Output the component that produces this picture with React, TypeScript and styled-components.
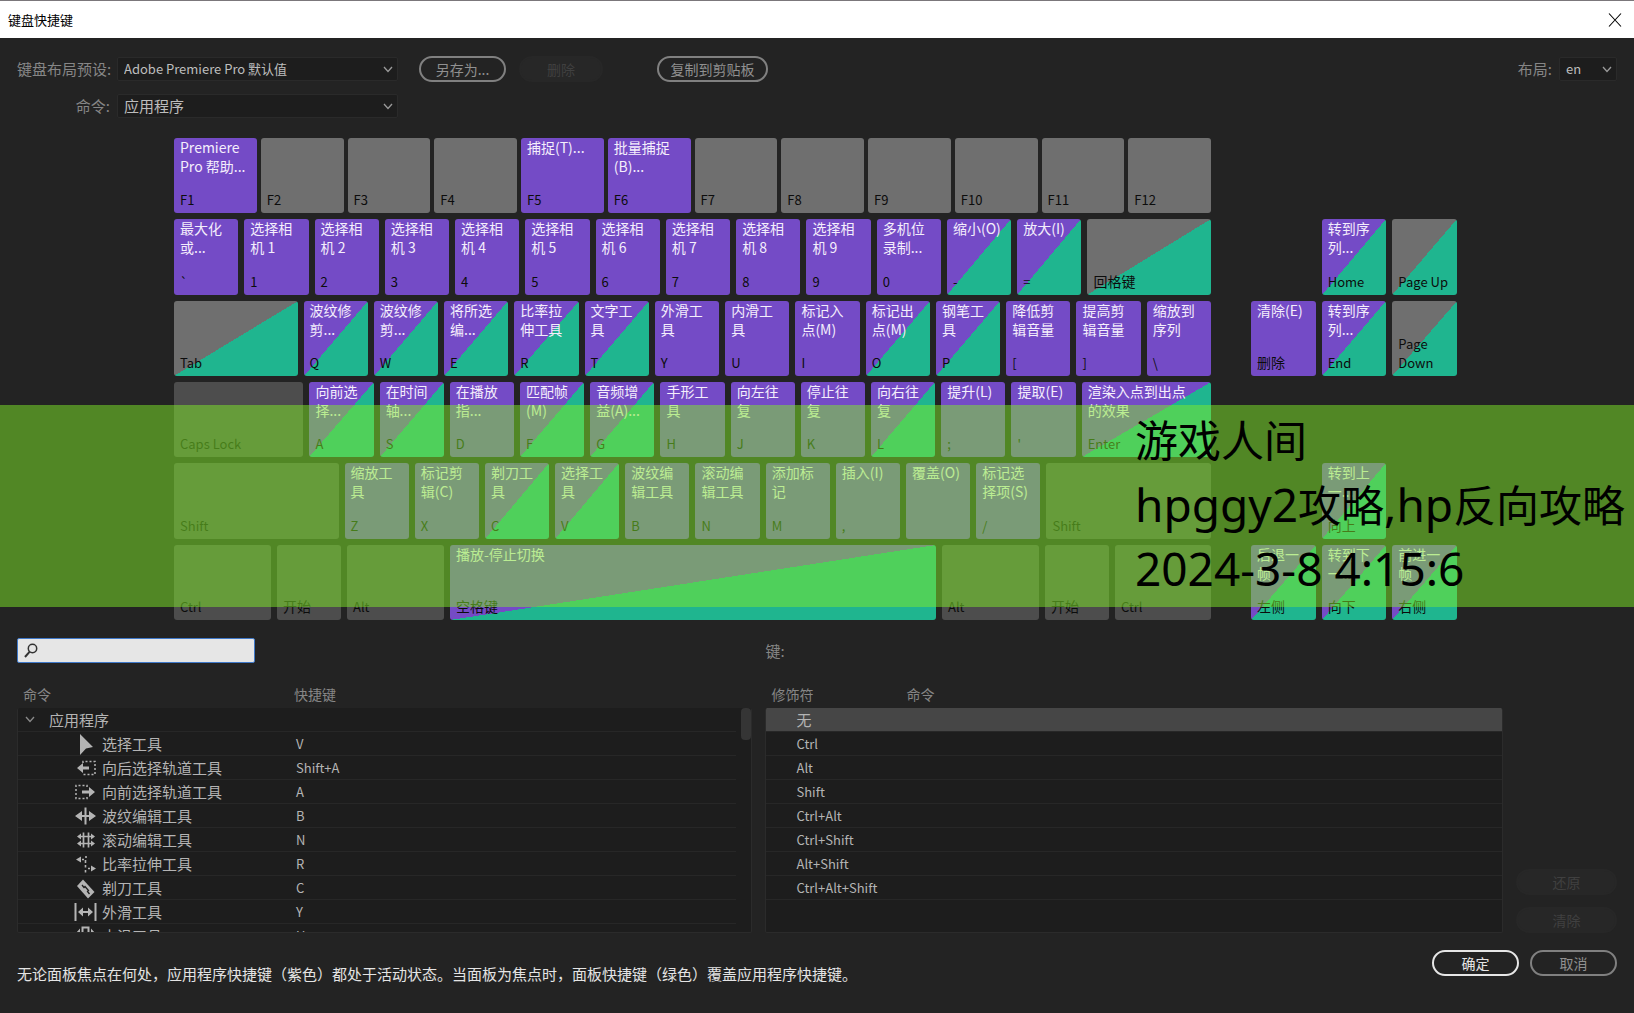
import React from "react";
import styled, { createGlobalStyle, css } from "styled-components";

const GlobalStyle = createGlobalStyle`
  * { box-sizing: border-box; }
  body {
    margin: 0;
    background: #232323;
    color: #b4b4b4;
    font: 15px/24px "Noto Sans CJK SC", sans-serif;
  }
  button, input, select { font: inherit; color: inherit; margin: 0; }
`;

const Dialog = styled.div`
  min-height: 100vh;
  display: flex;
  flex-direction: column;
  background: #232323;
  border-top: 1px solid #7b777b;
`;

const TitleBar = styled.header`
  display: flex;
  align-items: center;
  justify-content: space-between;
  height: 37px;
  padding: 0 11px 0 8px;
  background: #fff;
  color: #000;
`;

const Title = styled.h1`
  margin: 0;
  font-size: 13px;
  font-weight: 400;
  line-height: 24px;
`;

const CloseButton = styled.button`
  display: flex;
  padding: 0;
  border: 0;
  background: none;
`;

const Toolbar = styled.form`
  display: flex;
  flex-direction: column;
  gap: 11px;
  padding: 18px 17px 19px;
`;

const ToolRow = styled.div`
  display: flex;
  align-items: center;
  height: 26px;
`;

const Label = styled.label<{ $wide?: boolean }>`
  color: #868686;
  text-align: right;
  white-space: nowrap;
  margin-right: 7px;
  ${(p) => p.$wide && css`width: 93px;`}
`;

const SelectBox = styled.div<{ $width: number }>`
  position: relative;
  width: ${(p) => p.$width}px;
  svg {
    position: absolute;
    right: 5px;
    top: 9px;
    pointer-events: none;
  }
`;

const Select = styled.select<{ $latin?: boolean }>`
  appearance: none;
  display: block;
  width: 100%;
  height: 24px;
  padding: 0 20px 0 6px;
  border: 1px solid #2a2a2a;
  border-radius: 2px;
  background: #1d1d1d;
  color: #bdbdbd;
  font-size: ${(p) => (p.$latin ? 13 : 15)}px;
  line-height: 22px;
`;

const PillButton = styled.button<{ $width: number; $primary?: boolean }>`
  width: ${(p) => p.$width}px;
  height: 26px;
  padding: 0;
  border: 2px solid ${(p) => (p.$primary ? "#e6e6e6" : "#808080")};
  border-radius: 13px;
  background: transparent;
  color: ${(p) => (p.$primary ? "#e6e6e6" : "#909090")};
  font-size: 14px;
  line-height: 20px;
  white-space: nowrap;
  &:disabled {
    border-color: #272727;
    background: #272727;
    color: #404040;
  }
`;

const ButtonGroup = styled.div<{ $gap: number; $start?: number }>`
  display: flex;
  gap: ${(p) => p.$gap}px;
  margin-left: ${(p) => p.$start || 0}px;
`;

const Spacer = styled.div`
  flex: 1;
`;

const Board = styled.main`
  position: relative;
  display: grid;
  grid-template-columns: 174fr 1037fr 40fr 206fr 177fr;
  height: 482px;
`;

const KeyArea = styled.section<{ $column: number }>`
  grid-column: ${(p) => p.$column};
  display: grid;
  grid-template-rows: repeat(6, 1fr);
  gap: 6px;
  min-width: 0;
`;

const KeyRow = styled.div<{ $gap?: number }>`
  display: flex;
  gap: ${(p) => p.$gap || 6}px;
  min-width: 0;
`;

type Tone = "app" | "both" | "panel" | "none" | "mod";

const tones: Record<Tone, string> = {
  app: "#744bc6",
  both: "linear-gradient(to bottom right, #744bc6 50%, #1fb58f 50%)",
  panel: "linear-gradient(to bottom right, #6f6f6f 50%, #1fb58f 50%)",
  none: "#6f6f6f",
  mod: "#4d4d4d",
};

/* The basis equals the left padding, so weights stay proportional to full key widths. */
const KeyCap = styled.button<{ $tone: Tone; $weight: number }>`
  flex: ${(p) => p.$weight - 6} 1 6px;
  min-width: 0;
  display: flex;
  flex-direction: column;
  justify-content: space-between;
  padding: 0 0 4px 6px;
  border: 0;
  border-radius: 3px;
  background: ${(p) => tones[p.$tone]};
  text-align: left;
  white-space: pre;
  overflow: hidden;
`;

const Command = styled.span`
  color: #f4eefc;
  font-size: 14px;
  line-height: 19px;
`;

const Legend = styled.span<{ $latin: boolean }>`
  color: #0c0c0c;
  font-size: ${(p) => (p.$latin ? 13 : 14)}px;
  line-height: 19px;
`;

const Gap = styled.div`
  flex: 58 1 6px;
`;

const Banner = styled.aside`
  position: absolute;
  left: 0;
  right: 0;
  top: 267px;
  height: 202px;
  display: flex;
  justify-content: flex-end;
  background: rgba(128, 236, 40, 0.5);
  pointer-events: none;
`;

const BannerText = styled.div`
  width: 499px;
  padding-top: 1px;
  color: #000;
  font-family: "Noto Sans", "Noto Sans CJK SC", sans-serif;
  font-size: 46px;
  line-height: 65px;
  white-space: nowrap;
`;

const BannerLine = styled.div`
  height: 65px;
`;

const Han = styled.span`
  font-family: "Noto Sans CJK SC", sans-serif;
  font-size: 43px;
`;

const Lists = styled.div`
  display: grid;
  grid-template-columns: 735fr 737fr 101px;
  gap: 13px;
  padding: 18px 17px 17px;
`;

const Column = styled.section`
  min-width: 0;
`;

const ColumnTop = styled.div`
  display: flex;
  align-items: center;
  height: 25px;
  margin-bottom: 19px;
  color: #868686;
`;

const SearchBox = styled.label`
  display: flex;
  align-items: center;
  gap: 5px;
  width: 238px;
  height: 25px;
  padding: 0 6px;
  border: 1px solid #3f78c8;
  border-radius: 2px;
  background: #e6e6e6;
`;

const SearchInput = styled.input`
  flex: 1;
  min-width: 0;
  padding: 0;
  border: 0;
  outline: 0;
  background: transparent;
  color: #222;
`;

const Table = styled.table`
  position: relative;
  display: block;
`;

const Head = styled.thead`
  display: block;
`;

const Body = styled.tbody`
  display: block;
  height: 225px;
  overflow: hidden;
  border: 1px solid #2b2b2b;
  border-top: 0;
  border-radius: 2px;
  background: #1d1d1d;
`;

const Row = styled.tr<{ $first: number; $selected?: boolean; $inset?: number }>`
  display: grid;
  grid-template-columns: ${(p) => p.$first}px 1fr;
  grid-template-rows: 23px;
  height: 24px;
  margin-right: ${(p) => p.$inset || 0}px;
  border-bottom: 1px solid #272727;
  ${(p) => p.$selected && css`background: #464646;`}
`;

const HeadRow = styled.tr<{ $first: number }>`
  display: grid;
  grid-template-columns: ${(p) => p.$first}px 1fr;
  height: 26px;
`;

const HeadCell = styled.th`
  padding: 0 0 0 6px;
  color: #868686;
  font-weight: 400;
  font-size: 14px;
  line-height: 24px;
  text-align: left;
`;

const Cell = styled.td<{ $indent: number; $latin?: boolean }>`
  display: flex;
  align-items: center;
  gap: 5px;
  padding: 0 0 0 ${(p) => p.$indent}px;
  font-size: ${(p) => (p.$latin ? 13 : 15)}px;
  line-height: 22px;
  white-space: nowrap;
`;

const GroupName = styled.span`
  padding-left: 9px;
`;

const Thumb = styled.caption`
  position: absolute;
  right: 1px;
  top: 26px;
  width: 10px;
  height: 32px;
  border-radius: 4px;
  background: #353535;
`;

const SideButtons = styled.div`
  display: flex;
  flex-direction: column;
  justify-content: flex-end;
  gap: 12px;
`;

const Footer = styled.footer`
  display: flex;
  justify-content: space-between;
  padding: 0 17px 24px;
`;

const Hint = styled.p`
  margin: 0;
  padding-top: 12px;
  color: #e4e4e4;
`;

const Chevron = ({ color = "#9a9a9a" }: { color?: string }) => (
  <svg width="10" height="7" viewBox="0 0 10 7" fill="none" stroke={color} strokeWidth="1.3">
    <path d="M1 1l4 4.500L9 1" />
  </svg>
);

type KeyDef = [legend: string, command: string, tone: Tone, weight?: number];

const mainRows: KeyDef[][] = [
  [
    ["F1", "Premiere\nPro 帮助...", "app"], ["F2", "", "none"], ["F3", "", "none"], ["F4", "", "none"],
    ["F5", "捕捉(T)...", "app"], ["F6", "批量捕捉\n(B)...", "app"], ["F7", "", "none"], ["F8", "", "none"],
    ["F9", "", "none"], ["F10", "", "none"], ["F11", "", "none"], ["F12", "", "none"],
  ],
  [
    ["`", "最大化\n或...", "app"], ["1", "选择相\n机 1", "app"], ["2", "选择相\n机 2", "app"],
    ["3", "选择相\n机 3", "app"], ["4", "选择相\n机 4", "app"], ["5", "选择相\n机 5", "app"],
    ["6", "选择相\n机 6", "app"], ["7", "选择相\n机 7", "app"], ["8", "选择相\n机 8", "app"],
    ["9", "选择相\n机 9", "app"], ["0", "多机位\n录制...", "app"], ["-", "缩小(O)", "both"],
    ["=", "放大(I)", "both"], ["回格键", "", "panel", 123],
  ],
  [
    ["Tab", "", "panel", 123], ["Q", "波纹修\n剪...", "both"], ["W", "波纹修\n剪...", "both"],
    ["E", "将所选\n编...", "both"], ["R", "比率拉\n伸工具", "both"], ["T", "文字工\n具", "both"],
    ["Y", "外滑工\n具", "app"], ["U", "内滑工\n具", "app"], ["I", "标记入\n点(M)", "app"],
    ["O", "标记出\n点(M)", "both"], ["P", "钢笔工\n具", "both"], ["[", "降低剪\n辑音量", "app"],
    ["]", "提高剪\n辑音量", "app"], ["\\", "缩放到\n序列", "app"],
  ],
  [
    ["Caps Lock", "", "mod", 129], ["A", "向前选\n择...", "both"], ["S", "在时间\n轴...", "both"],
    ["D", "在播放\n指...", "app"], ["F", "匹配帧\n(M)", "both"], ["G", "音频增\n益(A)...", "both"],
    ["H", "手形工\n具", "app"], ["J", "向左往\n复", "app"], ["K", "停止往\n复", "app"],
    ["L", "向右往\n复", "both"], [";", "提升(L)", "app"], ["'", "提取(E)", "app"],
    ["Enter", "渲染入点到出点\n的效果", "both", 129],
  ],
  [
    ["Shift", "", "mod", 164], ["Z", "缩放工\n具", "app"], ["X", "标记剪\n辑(C)", "app"],
    ["C", "剃刀工\n具", "both"], ["V", "选择工\n具", "both"], ["B", "波纹编\n辑工具", "app"],
    ["N", "滚动编\n辑工具", "app"], ["M", "添加标\n记", "app"], [",", "插入(I)", "app"],
    ["", "覆盖(O)", "app"], ["/", "标记选\n择项(S)", "app"], ["Shift", "", "mod", 164],
  ],
  [
    ["Ctrl", "", "mod", 97], ["开始", "", "mod"], ["Alt", "", "mod", 97],
    ["空格键", "播放-停止切换", "both", 486], ["Alt", "", "mod", 97], ["开始", "", "mod"],
    ["Ctrl", "", "mod", 96],
  ],
];

const navRows: (KeyDef | null)[][] = [
  [],
  [null, ["Home", "转到序\n列...", "both"], ["Page Up", "", "panel"]],
  [["删除", "清除(E)", "app"], ["End", "转到序\n列...", "both"], ["Page\nDown", "", "panel"]],
  [],
  [null, ["向上", "转到上\n一...", "both"], null],
  [["左侧", "后退一\n帧", "both"], ["向下", "转到下\n一...", "both"], ["右侧", "前进一\n帧", "both"]],
];

const isLatin = (text: string) => /^[\x00-\x7f]*$/.test(text);

const Key = ({ def }: { def: KeyDef }) => {
  const [legend, command, tone, weight = 64] = def;
  return (
    <KeyCap type="button" $tone={tone} $weight={weight}>
      <Command>{command}</Command>
      <Legend $latin={isLatin(legend)}>{legend}</Legend>
    </KeyCap>
  );
};

const icons: Record<string, React.ReactNode> = {
  select: <path d="M7 2l13 13-7 1.500L7 23z" fill="#b4b4b4" stroke="none" />,
  back: (
    <>
      <path d="M10 7V5.500h12v13H10V17" strokeDasharray="2 2" strokeWidth="1.500" />
      <path d="M4 12l6-5v3.500h6v3h-6V17z" fill="#b4b4b4" stroke="none" />
    </>
  ),
  forward: (
    <>
      <path d="M14 7V5.500H3v13h11V17" strokeDasharray="2 2" strokeWidth="1.500" />
      <path d="M22 12l-6-5v3.500H9v3h7V17z" fill="#b4b4b4" stroke="none" />
    </>
  ),
  ripple: (
    <>
      <path d="M12.500 3.500v17M7 12h11" strokeWidth="2" />
      <path d="M2 12l7-5v10zM23 12l-7-5v10z" fill="#b4b4b4" stroke="none" />
    </>
  ),
  roll: (
    <>
      <path d="M10.500 4.500v15M15.500 4.500v15M7 8.500h12M7 15.500h12" strokeWidth="1.700" />
      <path d="M4 8.500l4-3v6zM22 8.500l-4-3v6zM4 15.500l4-3v6zM22 15.500l-4-3v6z" fill="#b4b4b4" stroke="none" />
    </>
  ),
  rate: (
    <>
      <path d="M13 4v2M12.500 8v3M12.500 13v2.500M12.500 18v2.500M9 7.500h2M15 16.500h2" strokeWidth="1.600" />
      <path d="M3 7.500L8 4.500v6zM23 16.500l-5-3v6z" fill="#b4b4b4" stroke="none" />
    </>
  ),
  razor: (
    <>
      <path d="M4 10l6-6.500L21.500 16 15 22.500z" fill="#b4b4b4" stroke="none" />
      <path d="M9 9l2 2.500 1-1 3.500 4-1 1 2 2.500" stroke="#1d1d1d" strokeWidth="1.300" />
    </>
  ),
  slip: (
    <>
      <path d="M2.500 3v18M22.500 3v18" strokeWidth="2" />
      <path d="M8 12h9" strokeWidth="2" />
      <path d="M5 12l5-4.500v9zM20 12l-5-4.500v9z" fill="#b4b4b4" stroke="none" />
    </>
  ),
  slide: (
    <>
      <path d="M9.500 20V3.500h6V20" strokeWidth="2" />
      <path d="M3 9l4-4.500v9zM22 9l-4-4.500v9z" fill="#b4b4b4" stroke="none" />
    </>
  ),
};

const ToolIcon = ({ name }: { name: string }) => (
  <svg width="24" height="24" viewBox="0 0 24 24" fill="none" stroke="#b4b4b4">
    {icons[name]}
  </svg>
);

const tools = [
  ["select", "选择工具", "V"],
  ["back", "向后选择轨道工具", "Shift+A"],
  ["forward", "向前选择轨道工具", "A"],
  ["ripple", "波纹编辑工具", "B"],
  ["roll", "滚动编辑工具", "N"],
  ["rate", "比率拉伸工具", "R"],
  ["razor", "剃刀工具", "C"],
  ["slip", "外滑工具", "Y"],
  ["slide", "内滑工具", "U"],
];

const modifiers = ["无", "Ctrl", "Alt", "Shift", "Ctrl+Alt", "Ctrl+Shift", "Alt+Shift", "Ctrl+Alt+Shift"];

export default function App() {
  return (
    <Dialog role="dialog" aria-labelledby="title">
      <GlobalStyle />
      <TitleBar>
        <Title id="title">键盘快捷键</Title>
        <CloseButton type="button" aria-label="关闭">
          <svg width="16" height="16" viewBox="0 0 16 16" stroke="#000" strokeWidth="1.1">
            <path d="M2 1.500l12 13M14 1.500L2 14.500" />
          </svg>
        </CloseButton>
      </TitleBar>

      <Toolbar>
        <ToolRow>
          <Label $wide htmlFor="preset">键盘布局预设:</Label>
          <SelectBox $width={281}>
            <Select id="preset" $latin><option>Adobe Premiere Pro 默认值</option></Select>
            <Chevron />
          </SelectBox>
          <ButtonGroup $gap={13} $start={21}>
            <PillButton type="button" $width={87}>另存为...</PillButton>
            <PillButton type="button" $width={84} disabled>删除</PillButton>
          </ButtonGroup>
          <ButtonGroup $gap={0} $start={54}>
            <PillButton type="button" $width={111}>复制到剪贴板</PillButton>
          </ButtonGroup>
          <Spacer />
          <Label htmlFor="layout">布局:</Label>
          <SelectBox $width={58}>
            <Select id="layout" $latin><option>en</option></Select>
            <Chevron />
          </SelectBox>
        </ToolRow>
        <ToolRow>
          <Label $wide htmlFor="scope">命令:</Label>
          <SelectBox $width={281}>
            <Select id="scope"><option>应用程序</option></Select>
            <Chevron />
          </SelectBox>
        </ToolRow>
      </Toolbar>

      <Board>
        <KeyArea $column={2}>
          {mainRows.map((row, i) => (
            <KeyRow key={i} $gap={i === 0 ? 4 : 6}>
              {row.map((def, j) => <Key key={j} def={def} />)}
            </KeyRow>
          ))}
        </KeyArea>
        <KeyArea $column={4}>
          {navRows.map((row, i) => (
            <KeyRow key={i}>
              {row.map((def, j) => (def ? <Key key={j} def={def} /> : <Gap key={j} />))}
            </KeyRow>
          ))}
        </KeyArea>
        <Banner>
          <BannerText>
            <BannerLine><Han>游戏人间</Han></BannerLine>
            <BannerLine>hpggy2<Han>攻略</Han>,hp<Han>反向攻略</Han></BannerLine>
            <BannerLine>2024-3-8 4:15:6</BannerLine>
          </BannerText>
        </Banner>
      </Board>

      <Lists>
        <Column>
          <ColumnTop>
            <SearchBox>
              <svg width="15" height="15" viewBox="0 0 15 15" fill="none" stroke="#333" strokeWidth="1.5">
                <circle cx="8.500" cy="5.500" r="4.200" />
                <path d="M5.500 8.800L1 14" strokeWidth="2" />
              </svg>
              <SearchInput type="text" aria-label="搜索" />
            </SearchBox>
          </ColumnTop>
          <Table>
            <Thumb />
            <Head>
              <HeadRow $first={271}>
                <HeadCell>命令</HeadCell>
                <HeadCell>快捷键</HeadCell>
              </HeadRow>
            </Head>
            <Body>
              <Row $first={278} $inset={15}>
                <Cell $indent={7}>
                  <Chevron color="#8a8a8a" />
                  <GroupName>应用程序</GroupName>
                </Cell>
                <Cell $indent={0} />
              </Row>
              {tools.map(([icon, name, shortcut]) => (
                <Row key={name} $first={278} $inset={15}>
                  <Cell $indent={55}>
                    <ToolIcon name={icon} />
                    {name}
                  </Cell>
                  <Cell $indent={0} $latin>{shortcut}</Cell>
                </Row>
              ))}
            </Body>
          </Table>
        </Column>

        <Column>
          <ColumnTop>键:</ColumnTop>
          <Table>
            <Head>
              <HeadRow $first={135}>
                <HeadCell>修饰符</HeadCell>
                <HeadCell>命令</HeadCell>
              </HeadRow>
            </Head>
            <Body>
              {modifiers.map((name, i) => (
                <Row key={name} $first={135} $selected={i === 0}>
                  <Cell $indent={30} $latin={isLatin(name)}>{name}</Cell>
                  <Cell $indent={0} />
                </Row>
              ))}
            </Body>
          </Table>
        </Column>

        <SideButtons>
          <PillButton type="button" $width={101} disabled>还原</PillButton>
          <PillButton type="button" $width={101} disabled>清除</PillButton>
        </SideButtons>
      </Lists>

      <Footer>
        <Hint>无论面板焦点在何处，应用程序快捷键（紫色）都处于活动状态。当面板为焦点时，面板快捷键（绿色）覆盖应用程序快捷键。</Hint>
        <ButtonGroup $gap={11}>
          <PillButton type="button" $width={87} $primary>确定</PillButton>
          <PillButton type="button" $width={87}>取消</PillButton>
        </ButtonGroup>
      </Footer>
    </Dialog>
  );
}
